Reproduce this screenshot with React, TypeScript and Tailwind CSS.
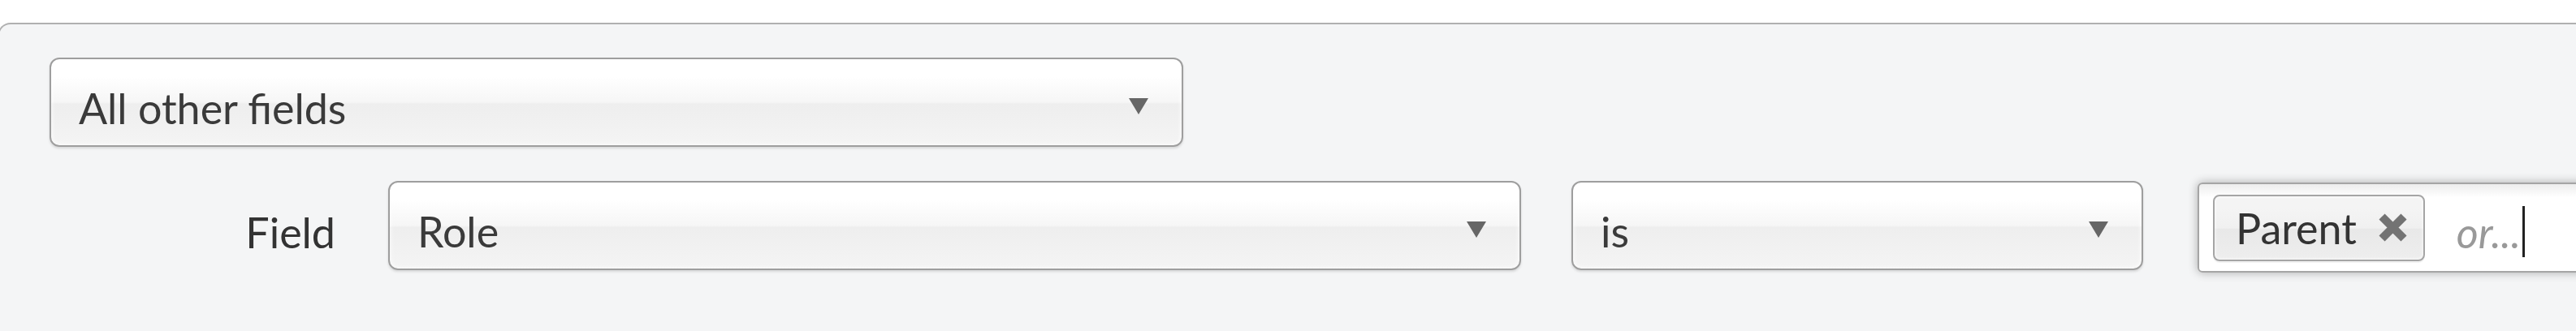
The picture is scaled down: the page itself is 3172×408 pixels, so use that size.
import React from 'react';

function Arrow() {
  return (
    <svg width="24" height="20" viewBox="0 0 24 20" className="mb-[5px] shrink-0">
      <polygon points="0,0 24,0 12,20" fill="#666" />
    </svg>
  );
}

function RemoveIcon() {
  return (
    <svg width="37" height="35" viewBox="0 0 37 35" className="shrink-0">
      <path d="M5 4 L32 31 M32 4 L5 31" stroke="#737373" strokeWidth="10" strokeLinecap="butt" />
    </svg>
  );
}

const selectBase =
  'flex h-[110px] shrink-0 items-center justify-between rounded-[12px] border-2 border-[#9e9e9e] bg-[linear-gradient(#fff_20%,#f6f6f6_50%,#eee_52%,#f4f4f4_100%)] pl-[34px] pr-[41px] pt-[14px] text-[52px] text-[#3a3a3a] shadow-[inset_0_0_6px_#fff,0_2px_3px_rgba(0,0,0,0.12)]';

export default function App() {
  return (
    <div className="h-[408px] w-[3172px] overflow-hidden bg-white pt-[28px] font-['Lato','Liberation_Sans',sans-serif]">
      {/* Filter panel */}
      <div className="-ml-[3px] h-[400px] w-[3400px] rounded-tl-[16px] border-l-2 border-t-2 border-[#b0b0b0] bg-[#f4f5f6] pl-[62px] pt-[41px]">
        {/* Group selector */}
        <div className={`${selectBase} w-[1396px]`}>
          <span>All other fields</span>
          <Arrow />
        </div>

        {/* Condition row */}
        <div className="mt-[42px] flex items-start">
          <div className="flex h-[110px] w-[352px] shrink-0 items-center justify-end pt-[16px] text-[52px] text-[#333]">
            Field
          </div>
          <div className={`${selectBase} ml-[65px] w-[1395px]`}>
            <span>Role</span>
            <Arrow />
          </div>
          <div className={`${selectBase} ml-[62px] w-[704px]`}>
            <span>is</span>
            <Arrow />
          </div>

          {/* Tag input */}
          <div className="ml-[67px] mt-[2px] flex h-[111px] w-[700px] shrink-0 items-center rounded-[6px] border-2 border-[#a5a5a5] bg-[linear-gradient(#eee_1%,#fff_15%)] pl-[17px] shadow-[0_0_12px_rgba(0,0,0,0.3)]">
            <div className="flex h-[82px] shrink-0 items-center rounded-[8px] border-2 border-[#a5a5a5] bg-[linear-gradient(#f4f4f4_20%,#f0f0f0_50%,#e8e8e8_52%,#eee_100%)] pl-[26px] pr-[19px] text-[52px] text-[#333] shadow-[inset_0_0_4px_#fff,0_2px_0_rgba(0,0,0,0.05)]">
              <span>Parent</span>
              <span className="ml-[26px] flex items-center">
                <RemoveIcon />
              </span>
            </div>
            <div className="ml-[39px] mt-[10px] flex items-center">
              <span className="text-[52px] italic text-[#999]">or...</span>
              <span className="ml-[2px] h-[63px] w-[3px] bg-[#222]" />
            </div>
          </div>
        </div>
      </div>
    </div>
  );
}
